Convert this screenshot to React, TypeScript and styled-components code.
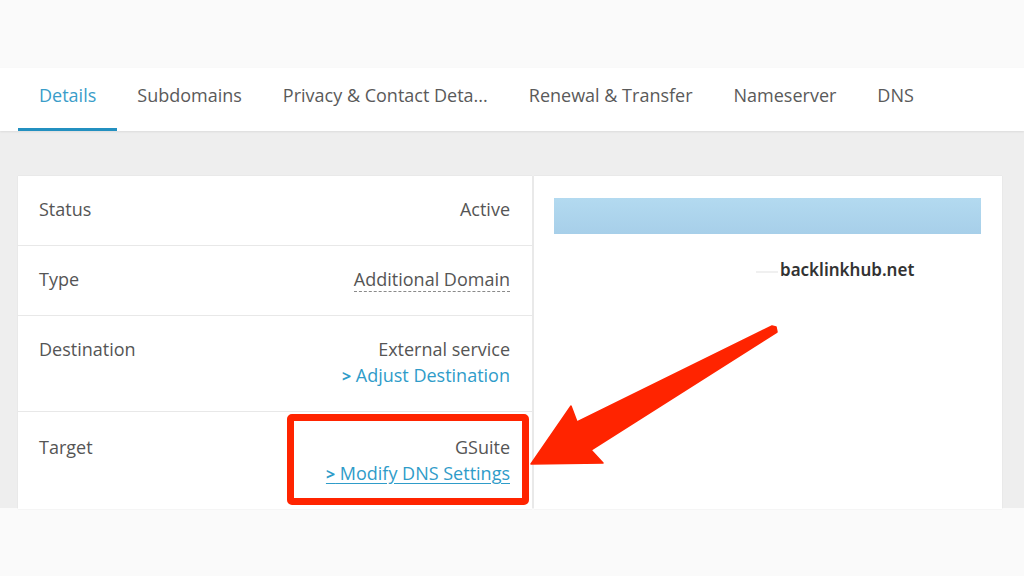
import React from "react";
import styled, {createGlobalStyle} from "styled-components";

const GlobalStyle = createGlobalStyle`
  html, body {
    margin: 0;
    padding: 0;
    background: #fafafa;
    font-family: "Open Sans", "Liberation Sans", sans-serif;
  }
`;

const Page = styled.div`
  position: relative;
  width: 1024px;
  height: 576px;
  overflow: hidden;
  padding-top: 68px;
  box-sizing: border-box;
`;

const Frame = styled.div`
  height: 440px;
  background: #eeeeee;
  display: flex;
  flex-direction: column;
`;

const TabBar = styled.nav`
  height: 63px;
  background: #ffffff;
  display: flex;
  align-items: stretch;
  padding-left: 18px;
  box-shadow: 0 1px 2px rgba(0, 0, 0, 0.08);
  flex-shrink: 0;
`;

const Tab = styled.div<{ $active?: boolean }>`
  display: flex;
  align-items: center;
  padding: 0 20.5px 7px;
  font-size: 18px;
  color: ${p => (p.$active ? "#3a9dc9" : "#5a5a5a")};
  border-bottom: 3px solid ${p => (p.$active ? "#2390c0" : "transparent")};
  white-space: nowrap;
  &:first-child {
    padding-left: 21px;
  }
`;

const Content = styled.div`
  display: grid;
  grid-template-columns: 514px 468px;
  gap: 2px;
  padding: 45px 22px 0 18px;
  flex: 1;
`;

const Card = styled.section`
  background: #ffffff;
  box-shadow: 0 0 1px rgba(0, 0, 0, 0.12);
`;

const Row = styled.div<{ $last?: boolean }>`
  display: flex;
  justify-content: space-between;
  align-items: flex-start;
  min-height: 70px;
  box-sizing: border-box;
  padding: ${p => (p.$last ? "22px" : "20px")} 22px 22px 21px;
  border-bottom: ${p => (p.$last ? "none" : "1px solid #e8e8e8")};
  font-size: 18px;
  line-height: 26px;
  color: #555555;
`;

const Label = styled.span``;

const Value = styled.div`
  text-align: right;
`;

const Dotted = styled.span`
  border-bottom: 1px dashed #8a8a8a;
`;

const Link = styled.a<{ $underline?: boolean }>`
  display: block;
  color: #2f9cc9;
  text-decoration: ${p => (p.$underline ? "underline" : "none")};
  text-underline-offset: 3px;
`;

const Chevron = styled.b`
  font-weight: 700;
  font-size: 16px;
`;

const SideBar = styled.div`
  height: 36px;
  margin: 22px 21px 0 20px;
  background: linear-gradient(#b3daf0, #a7cfe9);
`;

const Watermark = styled.div`
  display: flex;
  align-items: center;
  margin-top: 24px;
  padding-left: 222px;
  font-family: "Noto Sans", "Open Sans", sans-serif;
  font-weight: 600;
  font-size: 17px;
  color: #333333;
`;

const Smudge = styled.span`
  width: 22px;
  height: 2px;
  margin: 5px 2px 0 0;
  background: #f0f0f0;
`;

const Highlight = styled.div`
  position: absolute;
  left: 287px;
  top: 414px;
  width: 242px;
  height: 91px;
  box-sizing: border-box;
  border: 7px solid #ff2400;
  border-radius: 5px;
  pointer-events: none;
`;

const Overlay = styled.svg`
  position: absolute;
  left: 0;
  top: 0;
  pointer-events: none;
`;

const tabs = ["Details", "Subdomains", "Privacy & Contact Deta...", "Renewal & Transfer", "Nameserver", "DNS"];

export default function App() {
  return (
    <>
      <GlobalStyle/>
      <Page>
        <Frame>
          <TabBar>
            {tabs.map((t, i) => <Tab key={t} $active={i === 0}>{t}</Tab>)}
          </TabBar>
          <Content>
            <Card>
              <Row>
                <Label>Status</Label>
                <Value>Active</Value>
              </Row>
              <Row>
                <Label>Type</Label>
                <Value><Dotted>Additional Domain</Dotted></Value>
              </Row>
              <Row>
                <Label>Destination</Label>
                <Value>
                  External service
                  <Link><Chevron>&gt;</Chevron> Adjust Destination</Link>
                </Value>
              </Row>
              <Row $last>
                <Label>Target</Label>
                <Value>
                  GSuite
                  <Link $underline><Chevron>&gt;</Chevron> Modify DNS Settings</Link>
                </Value>
              </Row>
            </Card>
            <Card>
              <SideBar/>
              <Watermark><Smudge/>backlinkhub.net</Watermark>
            </Card>
          </Content>
        </Frame>
        <Highlight/>
        <Overlay width="1024" height="576" viewBox="0 0 1024 576">
          <polygon
            fill="#ff2400"
            stroke="#ff2400"
            strokeWidth="1.5"
            strokeLinejoin="round"
            points="531,464 571,406 577,422 772,326 776,327 777,332 591,450 603,463"
          />
        </Overlay>
      </Page>
    </>
  );
}
